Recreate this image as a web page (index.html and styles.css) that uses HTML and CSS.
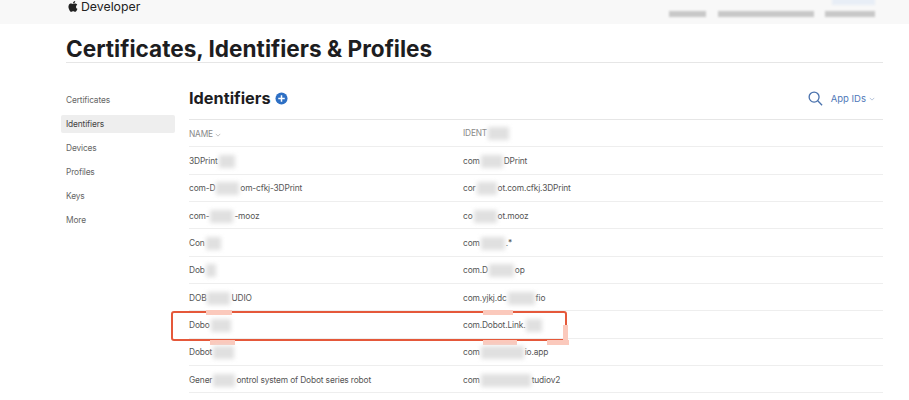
FILE: index.html
```html
<!DOCTYPE html>
<html lang="en">
<head>
  <meta charset="UTF-8">
  <title>Certificates, Identifiers &amp; Profiles</title>
  <link rel="stylesheet" href="styles.css">
</head>
<body>
  <header class="topbar">
    <div class="brand">
      <svg class="apple" viewBox="0 0 14 17" aria-hidden="true">
        <path d="M11.6 9c0-1.9 1.5-2.8 1.6-2.9-.9-1.300-2.200-1.500-2.700-1.500-1.200-.1-2.200.7-2.800.7-.6 0-1.500-.7-2.400-.7C4 4.600 2.900 5.300 2.300 6.300 1 8.500 2 11.800 3.200 13.600c.6.900 1.300 1.900 2.300 1.800.9 0 1.300-.6 2.400-.6s1.400.6 2.400.6 1.600-.9 2.200-1.800c.7-1 1-2 1-2.100-.1 0-1.900-.7-1.900-2.500zM9.800 3.500c.5-.6.800-1.400.7-2.300-.7 0-1.600.5-2.100 1.100-.5.500-.9 1.400-.8 2.200.8.100 1.700-.4 2.200-1z"/>
      </svg>
      <span>Developer</span>
    </div>
    <div class="account">
      <span class="smear account-a"></span>
      <span class="smear account-b"></span>
      <span class="smear account-c"></span>
      <span class="account-tint"></span>
    </div>
  </header>

  <div class="page">
    <h1 class="page-title">Certificates, Identifiers &amp; Profiles</h1>

    <div class="content">
      <nav class="sidebar">
        <a>Certificates</a>
        <a class="active">Identifiers</a>
        <a>Devices</a>
        <a>Profiles</a>
        <a>Keys</a>
        <a>More</a>
      </nav>

      <main class="main">
        <div class="main-head">
          <h2>Identifiers</h2>
          <svg class="add" viewBox="0 0 14 14" aria-hidden="true">
            <circle cx="7" cy="7" r="6.500"/>
            <path d="M7 3.500v7M3.500 7h7"/>
          </svg>
          <svg class="search" viewBox="0 0 16 16" aria-hidden="true">
            <circle cx="6.500" cy="6.500" r="5.300"/>
            <path d="M10.400 10.400l4.600 4.800"/>
          </svg>
          <span class="filter">App IDs</span>
          <svg class="caret" viewBox="0 0 8 5" aria-hidden="true"><path d="M1 1l3 3 3-3"/></svg>
        </div>

        <div class="row row-head">
          <div>NAME <svg class="caret caret-grey" viewBox="0 0 8 5" aria-hidden="true"><path d="M1 1l3 3 3-3"/></svg></div>
          <div>IDENT<span class="smear" style="width:21px"></span></div>
        </div>
        <div class="row">
          <div>3DPrint<span class="smear" style="width:16px"></span></div>
          <div>com<span class="smear" style="width:22px"></span>DPrint</div>
        </div>
        <div class="row">
          <div>com-D<span class="smear" style="width:23px"></span>om-cfkj-3DPrint</div>
          <div>cor<span class="smear" style="width:20px"></span>ot.com.cfkj.3DPrint</div>
        </div>
        <div class="row">
          <div>com-<span class="smear" style="width:23px"></span>-mooz</div>
          <div>co<span class="smear" style="width:23px"></span>ot.mooz</div>
        </div>
        <div class="row">
          <div>Con<span class="smear" style="width:15px"></span></div>
          <div>com<span class="smear" style="width:24px"></span>.*</div>
        </div>
        <div class="row">
          <div>Dob<span class="smear" style="width:10px"></span></div>
          <div>com.D<span class="smear" style="width:25px"></span>op</div>
        </div>
        <div class="row">
          <div>DOB<span class="smear" style="width:23px"></span>UDIO</div>
          <div>com.yjkj.dc<span class="smear" style="width:27px"></span>fio</div>
        </div>
        <div class="row">
          <div>Dobo<span class="smear" style="width:20px"></span></div>
          <div>com.Dobot.Link.<span class="smear" style="width:16px"></span></div>
          <span class="highlight">
            <span class="patch patch-a"></span>
            <span class="patch patch-b"></span>
            <span class="patch patch-c"></span>
            <span class="patch patch-d"></span>
            <span class="patch patch-e"></span>
            <span class="patch patch-f"></span>
          </span>
        </div>
        <div class="row">
          <div>Dobot<span class="smear" style="width:21px"></span></div>
          <div>com<span class="smear" style="width:43px"></span>io.app</div>
        </div>
        <div class="row">
          <div>Gener<span class="smear" style="width:22px"></span>ontrol system of Dobot series robot</div>
          <div>com<span class="smear" style="width:50px"></span>tudiov2</div>
        </div>
      </main>
    </div>
  </div>
</body>
</html>
```

FILE: styles.css
```css
body {
  margin: 0;
  height: 400px;
  overflow: hidden;
  background-color: #fff;
  color: #555;
  font-family: 'Inter', 'Liberation Sans', sans-serif;
  font-size: 8.400px;
  letter-spacing: -0.150px;
}

.topbar {
  display: flex;
  justify-content: space-between;
  align-items: center;
  height: 24px;
  padding: 0 34px 0 67px;
  background-color: #f8f8f8;
}

.brand {
  display: flex;
  align-items: center;
  gap: 3px;
  margin-top: -12px;
  color: #222;
  font-size: 12.300px;
  letter-spacing: 0;
}

.apple {
  width: 11px;
  height: 13px;
  fill: #222;
}

.account {
  position: relative;
  display: flex;
  margin-top: 4px;
}

.account .smear {
  height: 6px;
  margin: 0;
  background-color: #c8c8c8;
  filter: blur(1px);
}

.account-a { width: 37px; margin-right: 12px !important; }
.account-b { width: 96px; margin-right: 11px !important; }
.account-c { width: 50px; }

.account-tint {
  position: absolute;
  top: -15px;
  right: 0;
  width: 43px;
  height: 9px;
  background-color: #e8eef6;
  filter: blur(1px);
}

.page {
  padding: 0 26px 0 66px;
}

.page-title {
  margin: 0;
  height: 27px;
  padding-top: 11px;
  border-bottom: 1px solid #e6e6e6;
  color: #1d1d1f;
  font-size: 22.600px;
  font-weight: 700;
  line-height: 27px;
  letter-spacing: 0;
}

.content {
  display: flex;
  margin-left: -5px;
}

.sidebar {
  display: flex;
  flex-direction: column;
  width: 114px;
  margin-top: 25px;
  margin-right: 14px;
}

.sidebar a {
  height: 24px;
  padding-left: 5px;
  line-height: 24px;
  color: #666;
}

.sidebar a.active {
  height: 18px;
  margin: 3px 0;
  border-radius: 2px;
  background-color: #eee;
  line-height: 18px;
  color: #444;
}

.main {
  flex: 1;
}

.main-head {
  display: flex;
  align-items: center;
  height: 57px;
  padding-top: 14px;
  box-sizing: border-box;
  border-bottom: 1px solid #e6e6e6;
}

.main-head h2 {
  margin: 0;
  color: #1d1d1f;
  font-size: 16.300px;
  font-weight: 700;
  letter-spacing: 0;
}

.add {
  width: 13px;
  height: 13px;
  margin-left: 4px;
}

.add circle {
  fill: #2d6fc4;
}

.add path {
  stroke: #fff;
  stroke-width: 1.600;
  fill: none;
}

.search {
  width: 15px;
  height: 15px;
  margin-left: auto;
  fill: none;
  stroke: #4a72ad;
  stroke-width: 1.400;
}

.filter {
  margin-left: 8px;
  color: #4f78b8;
  font-size: 9.500px;
  letter-spacing: 0;
}

.caret {
  width: 6px;
  height: 4px;
  margin: 1px 8px 0 3px;
  fill: none;
  stroke: #9fb2cf;
}

.caret-grey {
  margin: 0;
  stroke: #aaa;
}

.row {
  position: relative;
  display: grid;
  grid-template-columns: 274px 1fr;
  align-items: center;
  height: 27.350px;
  box-sizing: border-box;
  padding-top: 2px;
  border-bottom: 1px solid #eee;
  white-space: nowrap;
}

.row-head {
  padding-top: 1px;
  color: #888;
  font-size: 8.300px;
}

.smear {
  display: inline-block;
  height: 13px;
  margin: 0 1px;
  vertical-align: middle;
  background-color: #e0e0e0;
  filter: blur(2px);
}

.highlight {
  position: absolute;
  top: 0;
  left: -18px;
  width: 392px;
  height: 26px;
  border: 2px solid #e5583a;
  border-radius: 3px;
}

.patch {
  position: absolute;
  height: 5px;
  background-color: #fbc9bc;
  filter: blur(0.500px);
}

.patch-a { top: -3px; left: 33px; width: 26px; }
.patch-b { bottom: -6px; left: 37px; width: 25px; }
.patch-c { top: -3px; left: 310px; width: 30px; }
.patch-d { bottom: -6px; left: 310px; width: 34px; }
.patch-e { bottom: -6px; left: 374px; width: 22px; }
.patch-f { top: 12px; right: -3px; width: 5px; height: 16px; }
```
